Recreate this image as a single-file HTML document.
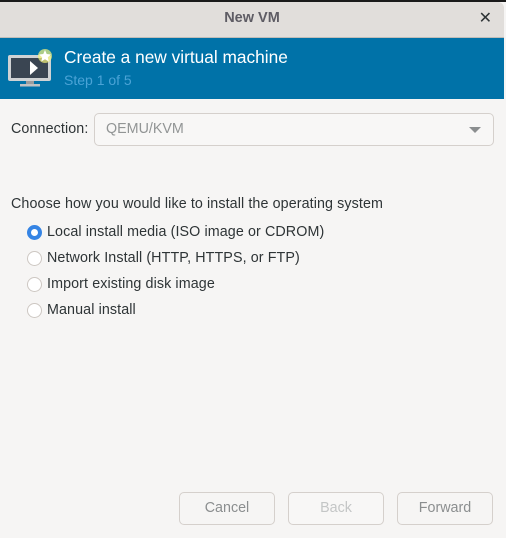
<!DOCTYPE html>
<html><head><style>
body{margin:0;width:506px;height:538px;background:#f6f5f4;font-family:"Liberation Sans","DejaVu Sans",sans-serif;position:relative;overflow:hidden;color:#2e3436}
.top{position:absolute;left:0;top:0;width:506px;height:2px;background:#1a1a1a}
.title{position:absolute;left:0;top:2px;width:504px;height:35px;background:#e1dedb;border-bottom:1px solid #c0bdb8;border-top-right-radius:6px;text-align:center;line-height:33px;font-size:14.5px;font-weight:bold;color:#5e5c64}
.x{position:absolute;right:12px;top:0;font-size:16px;color:#2e3436}
.hdr{position:absolute;left:0;top:38px;width:504px;height:61px;background:#0072a8}
.h1{position:absolute;left:64px;top:9px;font-size:17.3px;color:#fff}
.h2{position:absolute;left:64px;top:34px;font-size:14px;color:#4aa3d6}
.lbl{position:absolute;font-size:14.3px;letter-spacing:0.1px}
.combo{position:absolute;left:94px;top:113px;width:398px;height:31px;border:1px solid #d5d0cc;border-radius:5px;background:#f8f7f6;color:#929595;font-size:14.3px;line-height:31px;text-indent:11px}
.tri{position:absolute;right:12px;top:13px;width:0;height:0;border-left:6px solid transparent;border-right:6px solid transparent;border-top:6px solid #8b8e8f}
.r{position:absolute;left:27px;width:15px;height:15px;border-radius:50%;border:1px solid #cdc7c2;background:#fff;box-sizing:border-box}
.r.on{border:4.5px solid #3584e4}
.btn{position:absolute;top:492px;width:96px;height:33px;border:1px solid #d5d0cc;border-radius:5px;box-sizing:border-box;text-align:center;line-height:31px;font-size:14.3px;color:#8b8e8f;background:#f6f5f4}
</style></head><body>
<div class="top"></div>
<div class="title">New VM<span class="x">✕</span></div>
<div class="hdr">
<svg style="position:absolute;left:7px;top:8px" width="48" height="42" viewBox="0 0 48 42">
<rect x="1" y="9" width="43" height="26" rx="2" fill="#cfd2d4"/>
<rect x="4" y="12" width="37" height="20" fill="#3a4552"/>
<rect x="19" y="35" width="8" height="3" fill="#9a9c9e"/>
<rect x="13" y="38" width="20" height="2.5" fill="#bfc2c4"/>
<path d="M23 15 L31 22 L23 29Z" fill="#fff"/>
<circle cx="38" cy="10" r="7" fill="#f6f37a" opacity=".7"/>
<path d="M38 4 L39.7 8 L44 8.5 L40.8 11.3 L41.7 15.5 L38 13.3 L34.3 15.5 L35.2 11.3 L32 8.5 L36.3 8Z" fill="#fff"/>
</svg>
<div class="h1">Create a new virtual machine</div>
<div class="h2">Step 1 of 5</div>
</div>
<div class="lbl" style="left:11px;top:121px">Connection:</div>
<div class="combo">QEMU/KVM<div class="tri"></div></div>
<div class="lbl" style="left:11px;top:196px">Choose how you would like to install the operating system</div>
<div class="r on" style="top:225px"></div><div class="lbl" style="left:47px;top:224px">Local install media (ISO image or CDROM)</div>
<div class="r" style="top:251px"></div><div class="lbl" style="left:47px;top:250px">Network Install (HTTP, HTTPS, or FTP)</div>
<div class="r" style="top:277px"></div><div class="lbl" style="left:47px;top:276px">Import existing disk image</div>
<div class="r" style="top:303px"></div><div class="lbl" style="left:47px;top:302px">Manual install</div>
<div class="btn" style="left:179px">Cancel</div>
<div class="btn" style="left:288px;color:#c4c6c6;background:#f8f7f6">Back</div>
<div class="btn" style="left:397px">Forward</div>
</body></html>
